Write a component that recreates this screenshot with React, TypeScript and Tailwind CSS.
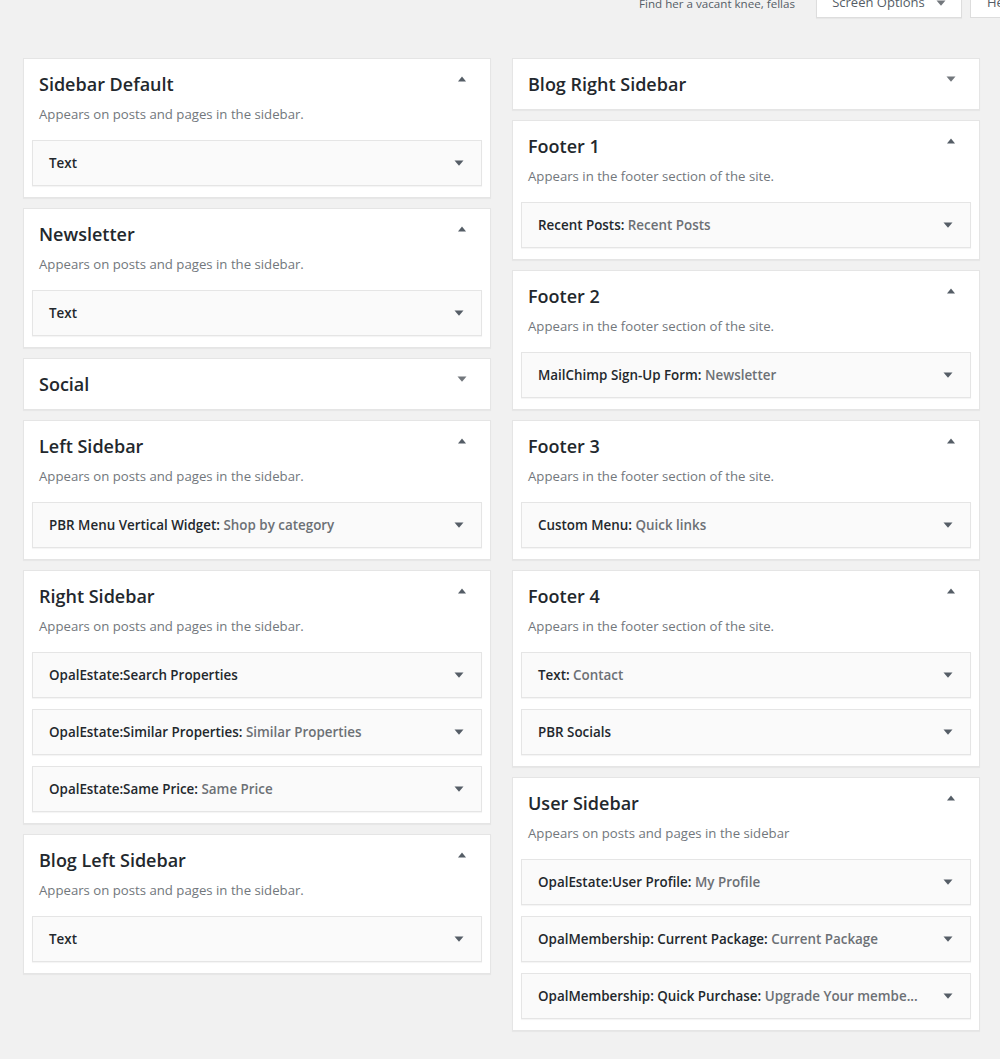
import React from "react";

type Widget = { name: string; title?: string };
type Area = { name: string; desc?: string; open: boolean; widgets: Widget[] };

const leftAreas: Area[] = [
  { name: "Sidebar Default", desc: "Appears on posts and pages in the sidebar.", open: true, widgets: [{ name: "Text" }] },
  { name: "Newsletter", desc: "Appears on posts and pages in the sidebar.", open: true, widgets: [{ name: "Text" }] },
  { name: "Social", open: false, widgets: [] },
  {
    name: "Left Sidebar",
    desc: "Appears on posts and pages in the sidebar.",
    open: true,
    widgets: [{ name: "PBR Menu Vertical Widget", title: "Shop by category" }],
  },
  {
    name: "Right Sidebar",
    desc: "Appears on posts and pages in the sidebar.",
    open: true,
    widgets: [
      { name: "OpalEstate:Search Properties" },
      { name: "OpalEstate:Similar Properties", title: "Similar Properties" },
      { name: "OpalEstate:Same Price", title: "Same Price" },
    ],
  },
  { name: "Blog Left Sidebar", desc: "Appears on posts and pages in the sidebar.", open: true, widgets: [{ name: "Text" }] },
];

const rightAreas: Area[] = [
  { name: "Blog Right Sidebar", open: false, widgets: [] },
  { name: "Footer 1", desc: "Appears in the footer section of the site.", open: true, widgets: [{ name: "Recent Posts", title: "Recent Posts" }] },
  {
    name: "Footer 2",
    desc: "Appears in the footer section of the site.",
    open: true,
    widgets: [{ name: "MailChimp Sign-Up Form", title: "Newsletter" }],
  },
  { name: "Footer 3", desc: "Appears in the footer section of the site.", open: true, widgets: [{ name: "Custom Menu", title: "Quick links" }] },
  {
    name: "Footer 4",
    desc: "Appears in the footer section of the site.",
    open: true,
    widgets: [{ name: "Text", title: "Contact" }, { name: "PBR Socials" }],
  },
  {
    name: "User Sidebar",
    desc: "Appears on posts and pages in the sidebar",
    open: true,
    widgets: [
      { name: "OpalEstate:User Profile", title: "My Profile" },
      { name: "OpalMembership: Current Package", title: "Current Package" },
      { name: "OpalMembership: Quick Purchase", title: "Upgrade Your membe..." },
    ],
  },
];

const Up = () => (
  <svg width="10" height="6" viewBox="0 0 10 6" className="block">
    <path d="M1 5.5 L5 0.5 L9 5.5 Z" fill="#555d66" />
  </svg>
);

const Down = ({ color = "#555d66" }: { color?: string }) => (
  <svg width="10" height="6" viewBox="0 0 10 6" className="block">
    <path d="M0.5 0.5 L9.5 0.5 L5 5.8 Z" fill={color} />
  </svg>
);

const WidgetRow = ({ w }: { w: Widget }) => (
  <div className="flex h-[46px] items-center justify-between border border-[#e5e5e5] bg-[#fafafa] pl-[16px] pr-[17px] shadow-[0_1px_1px_rgba(0,0,0,0.04)]">
    <div className="text-[13.4px] leading-5 font-semibold text-[#23282d]">
      {w.name}
      {w.title && (
        <>
          :<span className="text-[#6c7075]"> {w.title}</span>
        </>
      )}
    </div>
    <Down />
  </div>
);

const AreaCard = ({ a }: { a: Area }) => (
  <div className="border border-[#e5e5e5] bg-white shadow-[0_1px_1px_rgba(0,0,0,0.04)]">
    <div className={`flex items-start justify-between pl-[15px] pr-[23px] pt-[15px] ${a.open ? "" : "pb-[15px]"}`}>
      <h2 className="text-[18px] leading-5 font-semibold text-[#23282d]">{a.name}</h2>
      <div className="pt-[2px]">{a.open ? <Up /> : <Down color="#72777c" />}</div>
    </div>
    {a.open && (
      <>
        <p className="mt-[11px] px-[15px] text-[13.2px] leading-[18px] text-[#72777c]">{a.desc}</p>
        <div className="mt-[17px] flex flex-col gap-[11px] px-[8px] pb-[11px]">
          {a.widgets.map((w, i) => (
            <WidgetRow key={i} w={w} />
          ))}
        </div>
      </>
    )}
  </div>
);

export default function App() {
  return (
    <div className="min-h-screen w-full overflow-hidden bg-[#f1f1f1] pb-10" style={{ fontFamily: '"Open Sans", sans-serif' }}>
      <div className="flex h-[18px] items-end justify-end">
        <span className="mb-[7px] mr-[21px] text-[11.6px] leading-[14px] text-[#555d66]">Find her a vacant knee, fellas</span>
        <button className="flex h-[30px] w-[146px] items-center justify-center gap-[11px] border border-t-0 border-[#dddddd] bg-white text-[13px] text-[#555d66] shadow-[0_1px_1px_rgba(0,0,0,0.04)]">
          Screen Options
          <Down color="#72777c" />
        </button>
        <button className="ml-[8px] mr-[-40px] flex h-[30px] w-[70px] items-center justify-start gap-[8px] border border-t-0 border-[#dddddd] bg-white pl-[16px] text-[13px] text-[#555d66]">
          Help
          <Down color="#72777c" />
        </button>
      </div>
      <div className="mt-[40px] flex gap-[21px] pl-[23px]">
        <div className="flex w-[468px] flex-col gap-[10px]">
          {leftAreas.map((a) => (
            <AreaCard key={a.name} a={a} />
          ))}
        </div>
        <div className="flex w-[468px] flex-col gap-[10px]">
          {rightAreas.map((a) => (
            <AreaCard key={a.name} a={a} />
          ))}
        </div>
      </div>
    </div>
  );
}
